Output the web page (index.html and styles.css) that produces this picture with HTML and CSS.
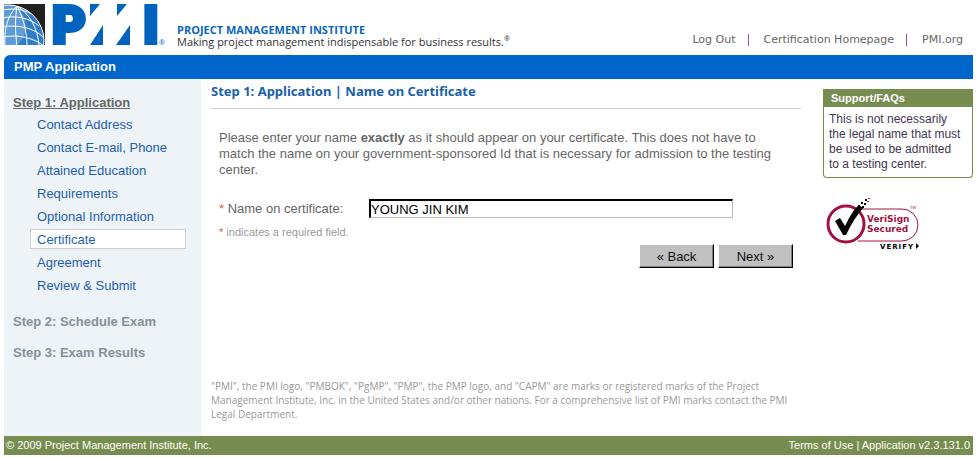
FILE: index.html
```html
<!DOCTYPE html>
<html lang="en">
<head>
    <meta charset="UTF-8">
    <meta name="viewport" content="width=device-width, initial-scale=1.0">
    <title>PMP Application - Name on Certificate</title>
    <link rel="stylesheet" href="styles.css">
</head>
<body>

    <div class="header">
        <svg class="logo" width="165" height="42" viewBox="0 0 165 42" role="img" aria-label="PMI">
            <defs>
                <clipPath id="logoBox"><rect width="41" height="41"/></clipPath>
            </defs>
            <rect width="41" height="41" fill="#221f20"/>
            <g clip-path="url(#logoBox)">
                <circle cx="4" cy="37" r="36" fill="#2f7cc9"/>
                <circle cx="-2" cy="22" r="24" fill="#8fbbe6" opacity="0.5"/>
                <g fill="none" stroke="#fff" stroke-width="1">
                    <circle cx="4" cy="37" r="36"/>
                    <path d="M13 2C3 12 0 26 1 42M13 2C11 14 11 28 13 42M13 2C19 13 23 28 23 42M13 2C26 10 34 25 35 42"/>
                    <path d="M-1 6C9 4 19 5 27 10M-1 14C11 11 26 14 35 22M-1 23C13 20 30 24 39 33M-1 33C14 30 30 34 40 42"/>
                </g>
            </g>
            <g class="logo-letters">
                <text x="48" y="39">P</text>
                <text x="139" y="39">I</text>
            </g>
            <path fill="#0063be" d="M86 0h10L86 12zM99 21v20H86zM113 0h10l-10 12zM126 21v20h-14z"/>
            <text class="logo-reg" x="155" y="41">®</text>
        </svg>
        <div class="tagline">
            <strong>PROJECT MANAGEMENT INSTITUTE</strong>
            <span>Making project management indispensable for business results.<sup>®</sup></span>
        </div>
        <div class="top-links">
            <a href="#">Log Out</a>
            <a href="#">Certification Homepage</a>
            <a href="#">PMI.org</a>
        </div>
    </div>

    <div class="title-bar">PMP Application</div>

    <div class="content">
        <div class="sidebar">
            <a class="step current" href="#">Step 1: Application</a>
            <ul class="step-links">
                <li><a href="#">Contact Address</a></li>
                <li><a href="#">Contact E-mail, Phone</a></li>
                <li><a href="#">Attained Education</a></li>
                <li><a href="#">Requirements</a></li>
                <li><a href="#">Optional Information</a></li>
                <li><a class="active" href="#">Certificate</a></li>
                <li><a href="#">Agreement</a></li>
                <li><a href="#">Review &amp; Submit</a></li>
            </ul>
            <div class="step">Step 2: Schedule Exam</div>
            <div class="step">Step 3: Exam Results</div>
        </div>

        <div class="main">
            <h1>Step 1: Application | Name on Certificate</h1>
            <form class="name-form">
                <p>Please enter your name <b>exactly</b> as it should appear on your certificate. This does not have to match the name on your government-sponsored Id that is necessary for admission to the testing center.</p>
                <div class="form-group">
                    <label for="certName"><span class="required">*</span> Name on certificate:</label>
                    <input type="text" id="certName" name="certName" value="YOUNG JIN KIM">
                </div>
                <div class="hint"><span class="required">*</span> indicates a required field.</div>
                <div class="buttons">
                    <button type="button">« Back</button>
                    <button type="button">Next »</button>
                </div>
            </form>
            <p class="legal">"PMI", the PMI logo, "PMBOK", "PgMP", "PMP", the PMP logo, and "CAPM" are marks or registered marks of the Project Management Institute, Inc. in the United States and/or other nations. For a comprehensive list of PMI marks contact the PMI Legal Department.</p>
        </div>

        <div class="aside">
            <div class="support">
                <h2>Support/FAQs</h2>
                <p>This is not necessarily the legal name that must be used to be admitted to a testing center.</p>
            </div>
            <svg class="verisign" width="98" height="54" viewBox="0 0 98 54" role="img" aria-label="VeriSign Secured">
                <path d="M32 12H76a15 15 0 0 1 0 32H32" fill="#fff" stroke="#a3123f" stroke-width="1"/>
                <circle cx="20" cy="27" r="18" fill="#fff" stroke="#a3123f" stroke-width="3"/>
                <path d="M9 24l5-3 5 8C24 19 28 12 33 8l4 3C31 18 25 27 20 38h-3z" fill="#000"/>
                <path d="M35 5h2v2h-2zM38 6h2v2h-2zM32 8h2v2h-2zM39 2h2v2h-2zM36 9h2v2h-2z" fill="#000"/>
                <path d="M42 1h2v1h-2zM41 4h2v1h-2z" fill="#a3123f"/>
                <text class="seal-name" x="41" y="25">VeriSign</text>
                <text class="seal-name" x="41" y="35">Secured</text>
                <text class="seal-tm" x="84" y="12">TM</text>
                <text class="seal-verify" x="54" y="52">VERIFY</text>
                <path d="M90 46v6l3-3z" fill="#000"/>
            </svg>
        </div>
    </div>

    <div class="footer">
        <span>© 2009 Project Management Institute, Inc.</span>
        <span><a href="#">Terms of Use</a> | Application v2.3.131.0</span>
    </div>

</body>
</html>
```
FILE: styles.css
```css
body {
    font-family: "Liberation Sans", Arial, sans-serif;
    font-size: 13px;
    margin: 4px 3px 0 4px;
    background-color: #ffffff;
    color: #666;
}

a {
    color: inherit;
    text-decoration: none;
}

.header {
    display: flex;
    align-items: flex-end;
    height: 51px;
}

.logo {
    flex: none;
    align-self: flex-start;
    overflow: visible;
}

.logo-letters {
    font: 900 52px Roboto, sans-serif;
    fill: #0063be;
    stroke: #0063be;
    stroke-width: 4px;
}

.logo-reg {
    font-size: 8px;
    fill: #0063be;
}

.tagline {
    display: flex;
    flex-direction: column;
    flex: 1;
    margin: 0 0 7px 8px;
    font-family: "Open Sans", sans-serif;
    font-size: 11px;
    line-height: 12px;
    color: #333;
}

.tagline strong {
    color: #0b67b8;
}

.tagline sup {
    font-size: 7px;
    line-height: 0;
}

.top-links {
    display: flex;
    padding: 0 10px 9px 0;
    font: 11px/12px "DejaVu Sans", Verdana, sans-serif;
}

.top-links a + a {
    margin-left: 12px;
    padding-left: 15px;
    border-left: 1px solid #8a5a9a;
}

.title-bar {
    padding-left: 10px;
    background-color: #0066cc;
    border-top-left-radius: 6px;
    color: #fff;
    font-size: 13px;
    font-weight: bold;
    line-height: 24px;
}

.content {
    display: flex;
}

.sidebar {
    flex: none;
    width: 188px;
    padding: 15px 0 61px 9px;
    background-color: #edf3f7;
}

.step {
    margin-bottom: 13px;
    color: #87919a;
    font-size: 13px;
    font-weight: bold;
    line-height: 18px;
}

.step.current {
    color: #666;
    text-decoration: underline;
}

.step-links {
    list-style: none;
    margin: 1px 15px 16px 17px;
    padding: 0;
    color: #1f5fad;
}

.step-links li {
    padding: 1px 0 2px;
}

.step-links a {
    display: block;
    padding: 2px 0 0 6px;
    border: 1px solid transparent;
    line-height: 16px;
}

.step-links .active {
    background-color: #fff;
    border-color: #ccc;
}

.main {
    flex: 1;
    display: flex;
    flex-direction: column;
    padding: 4px 22px 15px 10px;
}

h1 {
    margin: 0;
    padding-bottom: 8px;
    border-bottom: 1px solid #ccc;
    color: #1b5faa;
    font: bold 13px/17px "Noto Sans", Tahoma, sans-serif;
}

.name-form {
    padding: 21px 8px 0;
}

.name-form p {
    margin: 0 0 21px;
    line-height: 16px;
}

.form-group {
    display: flex;
    align-items: center;
}

.form-group label {
    width: 150px;
}

.required {
    color: #c0694a;
}

.form-group input {
    flex: none;
    box-sizing: border-box;
    width: 364px;
    height: 19px;
    padding: 0;
    border: 1px solid #bbb;
    border-top: 2px solid #000;
    border-left: 2px solid #000;
    color: #000;
    font: 13px "Liberation Sans", Arial, sans-serif;
}

.hint {
    margin-top: 7px;
    color: #999;
    font-size: 11px;
    line-height: 14px;
}

.buttons {
    display: flex;
    justify-content: flex-end;
    gap: 4px;
    margin-top: 5px;
}

.buttons button {
    width: 75px;
    height: 24px;
    padding: 0;
    background-color: #c0c0c0;
    border: 1px solid #fff;
    border-right-color: #000;
    border-bottom-color: #000;
    box-shadow: inset -1px -1px #808080;
    color: #111;
    font: 13px "Liberation Sans", Arial, sans-serif;
}

.legal {
    margin: auto 0 0;
    color: #999;
    font: 10px/14px "Open Sans", Arial, sans-serif;
}

.aside {
    flex: none;
    width: 150px;
    padding-top: 10px;
}

.support {
    border: 1px solid #778d50;
    border-top: 0;
    border-radius: 0 0 4px 4px;
}

.support h2 {
    margin: 0 -1px;
    padding-left: 8px;
    background-color: #778d50;
    color: #fff;
    font-size: 11px;
    line-height: 18px;
}

.support p {
    margin: 0;
    padding: 5px 9px 5px 5px;
    color: #43354f;
    font-size: 12px;
    line-height: 15px;
}

.verisign {
    display: block;
    margin: 19px 0 0 3px;
    overflow: visible;
}

.seal-name {
    font: bold 9px "DejaVu Sans", Verdana, sans-serif;
    fill: #a3123f;
}

.seal-tm {
    font-size: 4px;
    fill: #a3123f;
}

.seal-verify {
    font: bold 7px "DejaVu Sans", Verdana, sans-serif;
    letter-spacing: 1px;
    fill: #000;
}

.footer {
    display: flex;
    justify-content: space-between;
    padding: 0 3px 0 2px;
    background-color: #778d50;
    color: #fff;
    font-size: 11px;
    line-height: 19px;
}
```
